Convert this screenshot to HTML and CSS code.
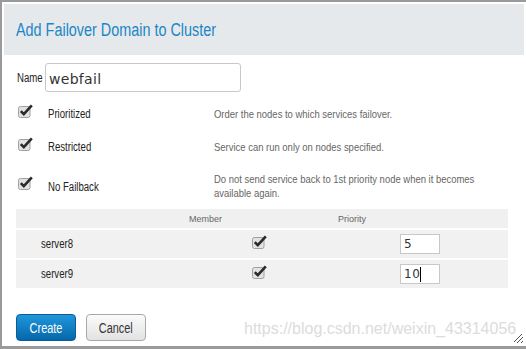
FILE: index.html
```html
<!DOCTYPE html>
<html lang="en">
<head>
    <meta charset="UTF-8">
    <title>Add Failover Domain to Cluster</title>
    <link rel="stylesheet" href="styles.css">
</head>
<body>
    <div class="dialog">
        <div class="header">
            <h1 class="title">Add Failover Domain to Cluster</h1>
        </div>
        <div class="content">
            <div class="name-row">
                <label class="name-label" for="domainName">Name</label>
                <input type="text" id="domainName" class="name-input" value="webfail">
            </div>
            <div class="options">
                <div class="option">
                    <span class="check"><svg width="15" height="14" viewBox="0 0 15 14"><rect x="0.5" y="2.5" width="11.5" height="11" rx="2" fill="#e2e2e2" stroke="#a0a0a0"/><path d="M2.8 7.2 L5.8 10.2 L13.8 1.4" fill="none" stroke="#2a2a2a" stroke-width="2.6"/></svg></span>
                    <span class="opt-label">Prioritized</span>
                    <span class="opt-desc">Order the nodes to which services failover.</span>
                </div>
                <div class="option">
                    <span class="check"><svg width="15" height="14" viewBox="0 0 15 14"><rect x="0.5" y="2.5" width="11.5" height="11" rx="2" fill="#e2e2e2" stroke="#a0a0a0"/><path d="M2.8 7.2 L5.8 10.2 L13.8 1.4" fill="none" stroke="#2a2a2a" stroke-width="2.6"/></svg></span>
                    <span class="opt-label">Restricted</span>
                    <span class="opt-desc">Service can run only on nodes specified.</span>
                </div>
                <div class="option">
                    <span class="check"><svg width="15" height="14" viewBox="0 0 15 14"><rect x="0.5" y="2.5" width="11.5" height="11" rx="2" fill="#e2e2e2" stroke="#a0a0a0"/><path d="M2.8 7.2 L5.8 10.2 L13.8 1.4" fill="none" stroke="#2a2a2a" stroke-width="2.6"/></svg></span>
                    <span class="opt-label">No Failback</span>
                    <span class="opt-desc">Do not send service back to 1st priority node when it becomes available again.</span>
                </div>
            </div>
            <div class="nodes">
                <div class="nodes-head">
                    <span></span>
                    <span>Member</span>
                    <span>Priority</span>
                </div>
                <div class="node-row">
                    <span class="node-name">server8</span>
                    <span class="node-member"><svg width="15" height="14" viewBox="0 0 15 14"><rect x="0.5" y="2.5" width="11.5" height="11" rx="2" fill="#e2e2e2" stroke="#a0a0a0"/><path d="M2.8 7.2 L5.8 10.2 L13.8 1.4" fill="none" stroke="#2a2a2a" stroke-width="2.6"/></svg></span>
                    <span class="node-priority"><span class="field">5</span></span>
                </div>
                <div class="node-row">
                    <span class="node-name">server9</span>
                    <span class="node-member"><svg width="15" height="14" viewBox="0 0 15 14"><rect x="0.5" y="2.5" width="11.5" height="11" rx="2" fill="#e2e2e2" stroke="#a0a0a0"/><path d="M2.8 7.2 L5.8 10.2 L13.8 1.4" fill="none" stroke="#2a2a2a" stroke-width="2.6"/></svg></span>
                    <span class="node-priority"><span class="field">10<span class="caret"></span></span></span>
                </div>
            </div>
            <div class="actions">
                <button class="btn btn-primary"><span class="btn-text">Create</span></button>
                <button class="btn btn-default"><span class="btn-text">Cancel</span></button>
            </div>
        </div>
        <div class="watermark">https://blog.csdn.net/weixin_43314056</div>
        <div class="grip"></div>
    </div>
</body>
</html>
```

FILE: styles.css
```css
/* the original uses a narrow sans; Liberation Sans squeezed to match */
body {
    margin: 0;
    padding: 0;
    background-color: #ffffff;
    font-family: 'Liberation Sans', sans-serif;
    color: #333;
    overflow: hidden;
}
.dialog {
    position: relative;
    width: 526px;
    height: 349px;
    box-sizing: border-box;
    border-top: 2px solid #9a9a9a;
    border-left: 2px solid #9a9a9a;
    border-bottom: 3px solid #9a9a9a;
    padding: 2px 2px 0 2px;
}
.header {
    height: 51px;
    background-color: #e6e9ec;
    padding-left: 12px;
    display: flex;
    align-items: center;
}
.title {
    margin: 0;
    font-weight: normal;
    font-size: 18px;
    color: #1b86c6;
    padding-top: 1px;
    white-space: nowrap;
    transform: scaleX(0.8);
    transform-origin: left center;
}
.content {
    padding-left: 12px;
}
.name-row {
    display: flex;
    align-items: center;
    margin-top: 8px;
}
.name-label {
    display: inline-block;
    width: 30px;
    font-size: 12px;
    color: #222;
    margin-left: 1px;
    margin-right: -2px;
    transform: scaleX(0.8);
    transform-origin: left center;
}
.name-input {
    width: 196px;
    height: 29px;
    box-sizing: border-box;
    border: 1px solid #c8c8c8;
    border-radius: 3px;
    padding: 2px 3px 0;
    font-family: 'DejaVu Sans', sans-serif;
    font-size: 14px;
    letter-spacing: 0.3px;
    color: #333;
    outline: none;
}
.options {
    margin-top: 5px;
}
.option {
    display: flex;
    align-items: center;
    padding: 9px 0;
    line-height: 14px;
}
.check {
    width: 32px;
    height: 14px;
    padding-left: 2px;
    box-sizing: border-box;
    display: flex;
    align-items: center;
    transform: translateY(-3px);
}
.opt-label {
    width: 166px;
    font-size: 12px;
    color: #222;
    padding-top: 1px;
    white-space: nowrap;
    transform: scaleX(0.8);
    transform-origin: left center;
}
.opt-desc {
    width: 310px;
    flex-shrink: 0;
    font-size: 11px;
    color: #666;
    transform: scaleX(0.86);
    transform-origin: left center;
}
.nodes {
    width: 492px;
}
.nodes-head {
    display: grid;
    grid-template-columns: 116px 147px 146px;
    height: 19px;
    align-items: center;
    background-color: #f0f0f0;
    font-size: 9px;
    color: #666;
    text-align: center;
}
.node-row {
    display: grid;
    grid-template-columns: 200px 84px 1fr;
    height: 28px;
    align-items: center;
    background-color: #f1f1f1;
    margin-top: 2px;
}
.node-name {
    padding-left: 25px;
    font-size: 12px;
    color: #222;
    transform: scaleX(0.8);
    transform-origin: 25px center;
}
.node-member {
    display: flex;
    justify-content: center;
    padding-left: 2px;
    transform: translateY(-2px);
}
.node-priority {
    padding-left: 100px;
}
.field {
    display: flex;
    align-items: center;
    width: 40px;
    height: 20px;
    box-sizing: border-box;
    border: 1px solid #c8c8c8;
    background-color: #fff;
    padding-left: 3px;
    font-family: 'DejaVu Sans', sans-serif;
    font-size: 12px;
    letter-spacing: 0.5px;
    color: #333;
}
.caret {
    display: inline-block;
    width: 1px;
    height: 15px;
    background-color: #000;
}
.actions {
    display: flex;
    gap: 10px;
    margin-top: 26px;
}
.btn {
    width: 60px;
    height: 27px;
    border-radius: 4px;
    font-family: 'Liberation Sans', sans-serif;
    font-size: 14px;
    padding: 0;
}
.btn-text {
    display: inline-block;
    transform: scaleX(0.78);
}
.btn-primary {
    background: linear-gradient(#1f97dc, #0567ab);
    border: 1px solid #0b5d97;
    color: #fff;
}
.btn-default {
    background: linear-gradient(#fbfbfb, #e2e2e2);
    border: 1px solid #a8a8a8;
    color: #333;
}
.watermark {
    position: absolute;
    left: 242px;
    top: 318px;
    font-size: 16px;
    color: #dcdcdc;
    white-space: nowrap;
}
.grip {
    position: absolute;
    right: 3px;
    bottom: 3px;
    width: 9px;
    height: 9px;
    background: linear-gradient(135deg, transparent 40%, #555 40%, #555 48%, transparent 48%, transparent 62%, #555 62%, #555 70%, transparent 70%, transparent 84%, #555 84%, #555 92%, transparent 92%);
}
```
